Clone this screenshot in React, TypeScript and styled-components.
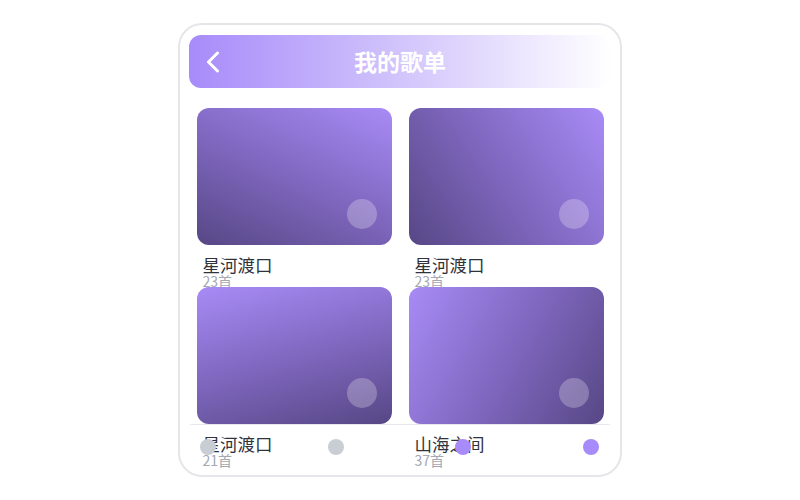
import React from 'react';
import styled, { createGlobalStyle } from 'styled-components';

const GlobalStyle = createGlobalStyle`
    html, body {
        margin: 0;
        padding: 0;
        background: #ffffff;
    }
    body {
        font-family: "Noto Sans CJK SC", "Noto Sans", sans-serif;
    }
`;

interface Playlist {
    title: string;
    count: number;
    angle: number;
}

const playlists: Playlist[] = [
    { title: '星河渡口', count: 23, angle: 205 },
    { title: '星河渡口', count: 23, angle: 235 },
    { title: '星河渡口', count: 21, angle: 165 },
    { title: '山海之间', count: 37, angle: 120 },
];

const Page = styled.div`
    width: 800px;
    height: 500px;
    display: flex;
    align-items: center;
    justify-content: center;
`;

const Phone = styled.div`
    position: relative;
    box-sizing: border-box;
    width: 444px;
    height: 454px;
    border: 2px solid #e5e6ea;
    border-radius: 24px;
    background: #ffffff;
    padding: 10px 9px;
    overflow: hidden;
`;

const Header = styled.header`
    position: relative;
    height: 53px;
    border-radius: 12px;
    background: linear-gradient(90deg, #a78bfa 0%, #d6cafc 55%, #ffffff 100%);
    display: flex;
    align-items: center;
    justify-content: center;
`;

const BackButton = styled.button`
    position: absolute;
    left: 16px;
    top: 50%;
    transform: translateY(-50%);
    background: none;
    border: none;
    padding: 0;
    display: flex;
    cursor: pointer;
`;

const Title = styled.h1`
    margin: 0 0 1px;
    color: #ffffff;
    font-size: 23px;
    line-height: 26px;
    font-weight: 700;
`;

const Grid = styled.div`
    margin-top: 20px;
    display: grid;
    grid-template-columns: 195px 195px;
    grid-auto-rows: 179px;
    column-gap: 17px;
    justify-content: center;
`;

const Card = styled.div`
    display: flex;
    flex-direction: column;
`;

const Cover = styled.div<{ $angle: number }>`
    position: relative;
    height: 137px;
    flex-shrink: 0;
    border-radius: 12px;
    background: linear-gradient(${(p) => p.$angle}deg, #a88bf6 0%, #8068c0 50%, #574785 100%);
`;

const PlayDot = styled.span`
    position: absolute;
    right: 15px;
    bottom: 16px;
    width: 30px;
    height: 30px;
    border-radius: 50%;
    background: rgba(255, 255, 255, 0.25);
`;

const CardTitle = styled.div`
    margin-top: 11px;
    padding-left: 6px;
    font-size: 17.5px;
    line-height: 18px;
    color: #30333b;
`;

const CardCount = styled.div`
    padding-left: 6px;
    font-size: 14px;
    line-height: 15px;
    color: #a3a8b2;
`;

const BottomNav = styled.nav`
    position: absolute;
    left: 10px;
    right: 10px;
    bottom: 7px;
    height: 44px;
    box-sizing: border-box;
    border-top: 1px solid #e8e9ee;
    padding: 0 11px 0 10px;
    display: flex;
    align-items: center;
    justify-content: space-between;
`;

const NavDot = styled.span<{ $active?: boolean }>`
    width: 16px;
    height: 16px;
    border-radius: 50%;
    background: ${(p) => (p.$active ? '#a78bfa' : '#c9cdd4')};
`;

export default function App() {
    return (
        <Page>
            <GlobalStyle />
            <Phone>
                <Header>
                    <BackButton aria-label="返回">
                        <svg width="16" height="22" viewBox="0 0 16 22" fill="none">
                            <path
                                d="M12.5 2 L3.5 11 L12.5 20"
                                stroke="#ffffff"
                                strokeWidth="3"
                                strokeLinecap="round"
                                strokeLinejoin="round"
                            />
                        </svg>
                    </BackButton>
                    <Title>我的歌单</Title>
                </Header>
                <Grid>
                    {playlists.map((p, i) => (
                        <Card key={i}>
                            <Cover $angle={p.angle}>
                                <PlayDot />
                            </Cover>
                            <CardTitle>{p.title}</CardTitle>
                            <CardCount>{p.count}首</CardCount>
                        </Card>
                    ))}
                </Grid>
                <BottomNav>
                    <NavDot />
                    <NavDot />
                    <NavDot $active />
                    <NavDot $active />
                </BottomNav>
            </Phone>
        </Page>
    );
}
